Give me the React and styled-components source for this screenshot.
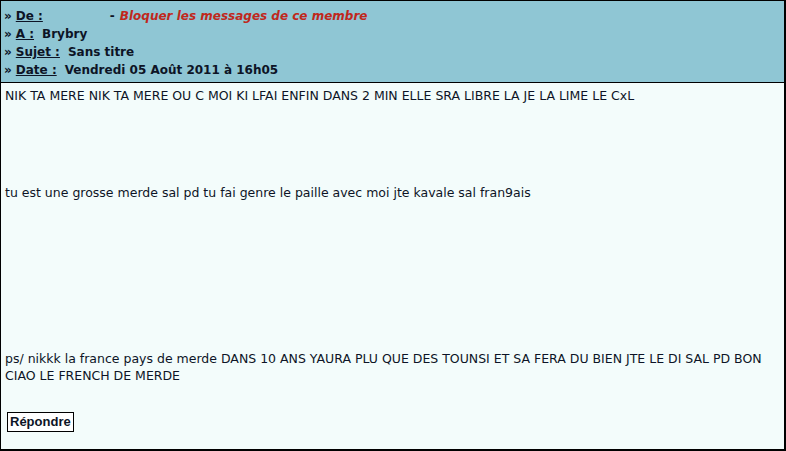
import React from 'react';
import styled, {createGlobalStyle} from 'styled-components';

const GlobalStyle = createGlobalStyle`
  html, body {
    margin: 0;
    padding: 0;
    background: #ffffff;
  }
  body {
    font-family: "DejaVu Sans", Verdana, sans-serif;
  }
`;

const Frame = styled.div`
  width: 786px;
  height: 451px;
  box-sizing: border-box;
  border-top: 1px solid #000;
  border-left: 1px solid #000;
  border-right: 2px solid #000;
  border-bottom: 2px solid #000;
  display: flex;
  flex-direction: column;
  background: #f3fcfb;
`;

const Header = styled.div`
  background: #8fc6d4;
  border-bottom: 1px solid #000;
  height: 82px;
  box-sizing: border-box;
  padding: 6px 0 0 3px;
  display: flex;
  flex-direction: column;
`;

const HeaderRow = styled.div`
  height: 18px;
  display: flex;
  align-items: center;
  font-size: 12px;
  font-weight: bold;
  color: #0d1426;
  white-space: pre;
`;

const Chevron = styled.span`
  margin-right: 4px;
`;

const Label = styled.span`
  text-decoration: underline;
  margin-right: ${p => p.$gap || 6}px;
`;

const Sender = styled.span`
  display: inline-block;
  width: ${p => p.$width}px;
`;

const BlockLink = styled.a`
  color: #c0281c;
  font-style: italic;
  text-decoration: none;
  margin-left: 5px;
`;

const Body = styled.div`
  flex: 1;
  padding: 5px 0 0 4px;
  font-size: 12.5px;
  color: #0d1426;
`;

const Line = styled.div`
  line-height: 16.5px;
  margin-top: ${p => p.$top || 0}px;
`;

const ReplyButton = styled.button`
  margin: 28px 0 0 2px;
  font-family: "Liberation Sans", Arial, sans-serif;
  font-size: 13px;
  font-weight: bold;
  color: #0d1426;
  background: #fff;
  border: 1px solid #000;
  padding: 0 2px;
  height: 20px;
  line-height: 18px;
  cursor: pointer;
`;

const App = () => {
  return (
    <>
      <GlobalStyle />
      <Frame>
        <Header>
          <HeaderRow>
            <Chevron>»</Chevron>
            <Label>De :</Label>
            <Sender $width={61} />
            <span>-</span>
            <BlockLink href="#">Bloquer les messages de ce membre</BlockLink>
          </HeaderRow>
          <HeaderRow>
            <Chevron>»</Chevron>
            <Label $gap={8}>A :</Label>
            Brybry
          </HeaderRow>
          <HeaderRow>
            <Chevron>»</Chevron>
            <Label $gap={8}>Sujet :</Label>
            Sans titre
          </HeaderRow>
          <HeaderRow>
            <Chevron>»</Chevron>
            <Label $gap={8}>Date :</Label>
            Vendredi 05 Août 2011 à 16h05
          </HeaderRow>
        </Header>
        <Body>
          <Line>NIK TA MERE NIK TA MERE OU C MOI KI LFAI ENFIN DANS 2 MIN ELLE SRA LIBRE LA JE LA LIME LE CxL</Line>
          <Line $top={80.5}>tu est une grosse merde sal pd tu fai genre le paille avec moi jte kavale sal fran9ais</Line>
          <Line $top={149.5}>ps/ nikkk la france pays de merde DANS 10 ANS YAURA PLU QUE DES TOUNSI ET SA FERA DU BIEN JTE LE DI SAL PD BON CIAO LE FRENCH DE MERDE</Line>
          <ReplyButton>Répondre</ReplyButton>
        </Body>
      </Frame>
    </>
  );
};

export default App;
